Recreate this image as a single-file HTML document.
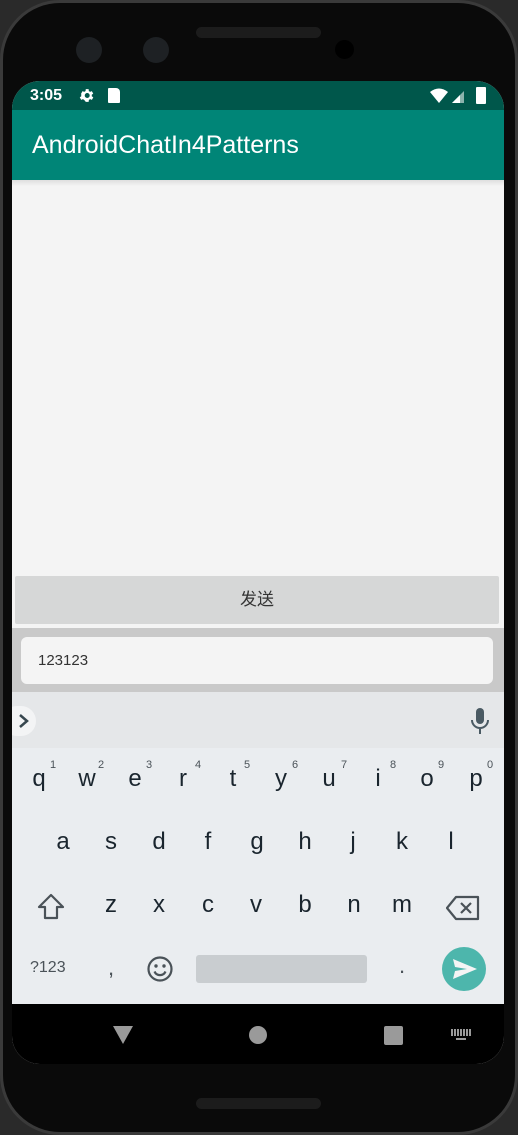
<!DOCTYPE html>
<html><head><meta charset="utf-8"><style>
*{margin:0;padding:0;box-sizing:border-box}
body{width:518px;height:1135px;background:#2a2a2a;position:relative;overflow:hidden;font-family:"Liberation Sans","Noto Sans CJK SC",sans-serif}
.abs{position:absolute}
.phone{left:0;top:0;width:518px;height:1135px;background:#0a0a0a;border-radius:60px;border:3px solid #3a3a3a}
.screen{left:12px;top:81px;width:492px;height:983px;border-radius:28px;overflow:hidden;background:#f4f4f4}
.k{position:absolute;font-size:24px;color:#1a252e;transform:translateX(-50%)}
.s{position:absolute;font-size:11px;color:#4a5258}
</style></head><body>
<div class="abs phone"></div>
<div class="abs" style="left:196px;top:27px;width:125px;height:11px;border-radius:6px;background:#1c1c1c"></div>
<div class="abs" style="left:196px;top:1098px;width:125px;height:11px;border-radius:6px;background:#1c1c1c"></div>
<div class="abs" style="left:76px;top:37px;width:26px;height:26px;border-radius:50%;background:#1e2124"></div>
<div class="abs" style="left:143px;top:37px;width:26px;height:26px;border-radius:50%;background:#1e2124"></div>
<div class="abs" style="left:335px;top:40px;width:19px;height:19px;border-radius:50%;background:#000"></div>
<div class="abs screen">
 <div class="abs" style="left:0;top:0;width:492px;height:29px;background:#00574b"></div>
 <div class="abs" style="left:18px;top:6px;color:#fff;font-size:16px;font-weight:bold">3:05</div>
 <svg class="abs" style="left:66px;top:6px" width="17" height="17" viewBox="0 0 24 24"><path fill="#fff" d="M19.4 13a7.5 7.5 0 000-2l2.1-1.6-2-3.5-2.5 1a7 7 0 00-1.7-1L15 3h-4l-.4 2.9a7 7 0 00-1.7 1l-2.5-1-2 3.5L4.6 11a7.5 7.5 0 000 2l-2.1 1.6 2 3.5 2.5-1a7 7 0 001.7 1L11 21h4l.4-2.9a7 7 0 001.7-1l2.5 1 2-3.5zM13 15.5a3.5 3.5 0 110-7 3.5 3.5 0 010 7z"/></svg>
 <div class="abs" style="left:96px;top:7px;width:12px;height:15px;background:#fff;border-radius:1px 4px 1px 1px"></div>
 <svg class="abs" style="left:418px;top:7px" width="50" height="16" viewBox="0 0 50 16"><path fill="#fff" d="M0 4Q9-3 18 4L9 15z"/><path fill="#fff" d="M22 15L34 3V15z" opacity=".55"/><path fill="#fff" d="M22 15L30 7V15z"/></svg>
 <div class="abs" style="left:464px;top:6px;width:10px;height:17px;background:#fff;border-radius:1px"></div>
 <div class="abs" style="left:0;top:29px;width:492px;height:70px;background:#008577"></div>
 <div class="abs" style="left:20px;top:50px;color:#fff;font-size:25px">AndroidChatIn4Patterns</div>
 <div class="abs" style="left:0;top:99px;width:492px;height:6px;background:linear-gradient(#dedede,#f4f4f4)"></div>
 <div class="abs" style="left:3px;top:495px;width:484px;height:48px;background:#d6d7d7;border-radius:2px;text-align:center;line-height:48px;font-size:17px;color:#333">发送</div>
 <div class="abs" style="left:0;top:547px;width:492px;height:64px;background:#c9c9c9"></div>
 <div class="abs" style="left:9px;top:556px;width:472px;height:47px;background:#f4f4f4;border-radius:6px;font-size:15px;color:#333;line-height:47px;padding-left:17px">123123</div>
 <div class="abs" style="left:0;top:611px;width:492px;height:56px;background:#e5e7e9"></div>
 <div class="abs" style="left:-10px;top:625px;width:34px;height:30px;border-radius:15px;background:#f3f4f5"></div>
 <svg class="abs" style="left:6px;top:632px" width="12" height="16" viewBox="0 0 12 16"><path d="M2 2l7 6-7 6" fill="none" stroke="#37474f" stroke-width="2.5"/></svg>
 <svg class="abs" style="left:458px;top:627px" width="20" height="26" viewBox="0 0 20 26"><rect x="6" y="0" width="8" height="16" rx="4" fill="#4a5a63"/><path d="M2 12a8 8 0 0016 0M10 20v6" fill="none" stroke="#4a5a63" stroke-width="2"/></svg>
 <div class="abs" style="left:0;top:667px;width:492px;height:256px;background:#eaedf0"></div>
 <div style="position:absolute;left:0;top:684px;width:492px">
  <span class="k" style="left:27px">q</span><span class="k" style="left:75px">w</span><span class="k" style="left:123px">e</span><span class="k" style="left:171px">r</span><span class="k" style="left:221px">t</span><span class="k" style="left:269px">y</span><span class="k" style="left:317px">u</span><span class="k" style="left:366px">i</span><span class="k" style="left:415px">o</span><span class="k" style="left:464px">p</span>
  <span class="s" style="left:38px;top:-6px">1</span><span class="s" style="left:86px;top:-6px">2</span><span class="s" style="left:134px;top:-6px">3</span><span class="s" style="left:183px;top:-6px">4</span><span class="s" style="left:232px;top:-6px">5</span><span class="s" style="left:280px;top:-6px">6</span><span class="s" style="left:329px;top:-6px">7</span><span class="s" style="left:378px;top:-6px">8</span><span class="s" style="left:426px;top:-6px">9</span><span class="s" style="left:475px;top:-6px">0</span>
 </div>
 <div style="position:absolute;left:0;top:747px;width:492px">
  <span class="k" style="left:51px">a</span><span class="k" style="left:99px">s</span><span class="k" style="left:147px">d</span><span class="k" style="left:196px">f</span><span class="k" style="left:245px">g</span><span class="k" style="left:293px">h</span><span class="k" style="left:341px">j</span><span class="k" style="left:390px">k</span><span class="k" style="left:439px">l</span>
 </div>
 <div style="position:absolute;left:0;top:810px;width:492px">
  <span class="k" style="left:99px">z</span><span class="k" style="left:147px">x</span><span class="k" style="left:196px">c</span><span class="k" style="left:244px">v</span><span class="k" style="left:293px">b</span><span class="k" style="left:342px">n</span><span class="k" style="left:390px">m</span>
 </div>
 <svg class="abs" style="left:24px;top:812px" width="30" height="28" viewBox="0 0 30 28"><path d="M15 2L3 14h6v11h12V14h6z" fill="none" stroke="#4a5258" stroke-width="2.2" stroke-linejoin="round"/></svg>
 <svg class="abs" style="left:434px;top:814px" width="34" height="26" viewBox="0 0 34 26"><path d="M10 2h22v22H10L1 13z" fill="none" stroke="#4a5258" stroke-width="2.2" stroke-linejoin="round"/><path d="M15 8l10 10M25 8L15 18" stroke="#4a5258" stroke-width="2.2"/></svg>
 <div class="abs" style="left:18px;top:878px;font-size:16px;color:#4a5258">?123</div>
 <div class="abs" style="left:96px;top:874px;font-size:22px;color:#4a5258">,</div>
 <svg class="abs" style="left:134px;top:874px" width="28" height="28" viewBox="0 0 28 28"><circle cx="14" cy="14" r="11.5" fill="none" stroke="#4a5258" stroke-width="2.2"/><circle cx="10" cy="11" r="1.7" fill="#4a5258"/><circle cx="18" cy="11" r="1.7" fill="#4a5258"/><path d="M8.5 16.5a6 6 0 0011 0" fill="none" stroke="#4a5258" stroke-width="2.2"/></svg>
 <div class="abs" style="left:184px;top:874px;width:171px;height:28px;background:#c9cdd0;border-radius:3px"></div>
 <div class="abs" style="left:387px;top:872px;font-size:22px;color:#4a5258">.</div>
 <div class="abs" style="left:430px;top:866px;width:44px;height:44px;border-radius:50%;background:#4db6ac"></div>
 <svg class="abs" style="left:440px;top:877px" width="26" height="22" viewBox="0 0 26 22"><path d="M1 1l24 10L1 21l2-8 12-2-12-2z" fill="#f4f4f4"/></svg>
 <div class="abs" style="left:0;top:923px;width:492px;height:60px;background:#000"></div>
 <svg class="abs" style="left:100px;top:944px" width="22" height="20" viewBox="0 0 22 20"><path d="M1 1h20L11 19z" fill="#9a9a9a"/></svg>
 <div class="abs" style="left:237px;top:945px;width:18px;height:18px;border-radius:50%;background:#9a9a9a"></div>
 <div class="abs" style="left:372px;top:945px;width:19px;height:19px;border-radius:2px;background:#9a9a9a"></div>
 <div class="abs" style="left:439px;top:948px;width:20px;height:7px;background:repeating-linear-gradient(90deg,#9a9a9a 0 2px,transparent 2px 3px)"></div>
 <div class="abs" style="left:444px;top:957px;width:10px;height:2px;background:#9a9a9a"></div>
</div>
</body></html>
